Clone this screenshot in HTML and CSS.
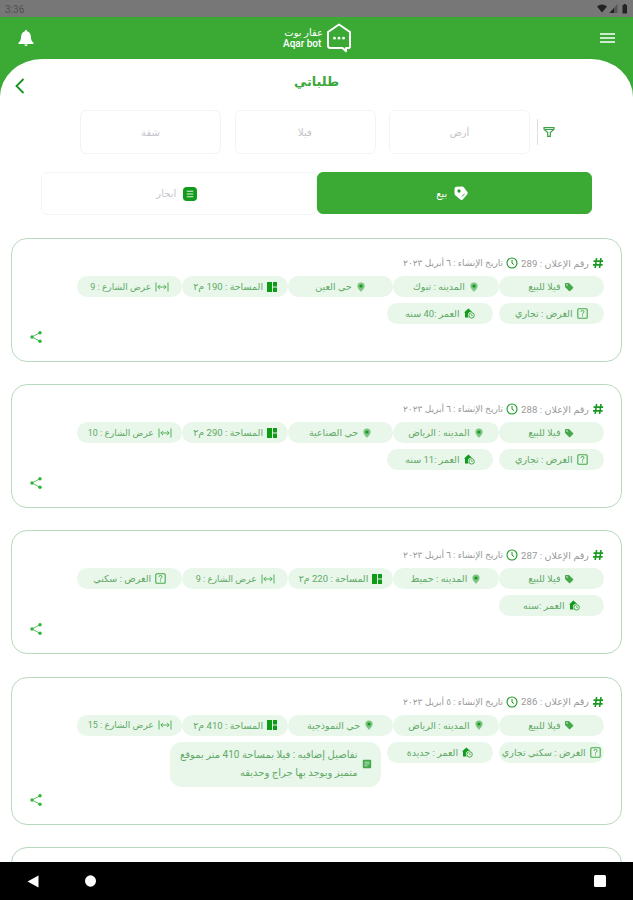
FILE: index.html
```
<!DOCTYPE html>
<html lang="ar" dir="rtl">
<head>
  <meta charset="UTF-8" />
  <meta name="viewport" content="width=device-width, initial-scale=1.0" />
  <title>طلباتي</title>
  <link rel="stylesheet" href="styles.css">
</head>
<body>
  <svg class="defs" width="0" height="0">
    <symbol id="hash" viewBox="0 0 12 12"><path d="M4.6 1 3.2 11M9 1 7.6 11M1.5 4.1h9.6M1 7.9h9.6" fill="none" stroke="currentColor" stroke-width="1.6"/></symbol>
    <symbol id="clock" viewBox="0 0 12 12"><circle cx="6" cy="6" r="5" fill="none" stroke="currentColor" stroke-width="1.1"/><path d="M6 3v3.2l2 1.4" fill="none" stroke="currentColor"/></symbol>
    <symbol id="tag" viewBox="0 0 10 10"><path d="M1 1.8Q1 1 1.8 1H5l4 4q.6.6 0 1.200L6.200 9Q5.600 9.600 5 9L1 5z" fill="currentColor"/><circle cx="3" cy="3" r=".8" fill="#e8f7ea"/></symbol>
    <symbol id="pin" viewBox="0 0 10 10"><path d="M5 .4a3.600 3.600 0 0 1 3.600 3.600C8.600 6.400 5 9.800 5 9.800S1.400 6.400 1.400 4A3.600 3.600 0 0 1 5 .4z" fill="currentColor" opacity=".65"/><circle cx="5" cy="4" r="1.600" fill="#119a1c"/></symbol>
    <symbol id="area" viewBox="0 0 10 10"><path d="M0 0h5v10H0zM6 0h4v4.400H6zM6 5.600h4V10H6z" fill="#0e9c16"/></symbol>
    <symbol id="width" viewBox="0 0 14 10"><path d="M1 .5v9M13 .5v9M3 5h8M5 2.800 2.800 5 5 7.200M9 2.800 11.200 5 9 7.200" fill="none" stroke="currentColor" stroke-width=".9"/></symbol>
    <symbol id="help" viewBox="0 0 11 11"><rect x=".8" y=".8" width="9.400" height="9.400" rx="1" fill="none" stroke="currentColor" stroke-width="1.100"/><path d="M4 3.800q0-1.300 1.500-1.300T7 3.800q0 .9-1.500 1.900v.8M5.500 7.500v1" fill="none" stroke="currentColor"/></symbol>
    <symbol id="age" viewBox="0 0 11 11"><path d="M0 4.600 4.400.5 8.500 4.300A3.300 3.300 0 0 0 4.600 9.500H1V4.600z" fill="#119a1c"/><circle cx="7.600" cy="7.400" r="2.700" fill="none" stroke="currentColor" stroke-width="1"/><path d="M7.600 6v1.500h1.200" fill="none" stroke="currentColor" stroke-width=".7"/></symbol>
    <symbol id="note" viewBox="0 0 10 10"><rect x=".8" y=".8" width="8.400" height="8.400" rx="1" fill="currentColor"/><path d="M2.500 3.200h5M2.500 5h5M2.500 6.800h3" stroke="#e8f7ea" stroke-width=".7"/></symbol>
    <symbol id="share" viewBox="0 0 12 12"><path d="M10 1.700 2 6l8 4.300" fill="none" stroke="currentColor" stroke-width=".8"/><circle cx="10" cy="1.800" r="1.700" fill="currentColor"/><circle cx="2" cy="6" r="1.700" fill="currentColor"/><circle cx="10" cy="10.200" r="1.700" fill="currentColor"/></symbol>
  </svg>

  <div class="status">
    <svg width="31" height="10" viewBox="0 0 31 10"><path d="M0 2.500Q5-1.500 10 2.500L5 8.500z" fill="#222"/><path d="M12.500 9 20.500 0v9z" fill="#555"/><path d="M12.500 9 17 4v5z" fill="#222"/><path d="M25.500 1h1.300V0h2v1H30v8.500h-4.500z" fill="#222"/></svg>
    <span class="time">3:36</span>
  </div>

  <header>
    <svg class="menu" width="15" height="10" viewBox="0 0 15 10"><path d="M0 1h15M0 5h15M0 9h15" stroke="#fff" stroke-width="1.300"/></svg>
    <div class="logo">
      <svg width="26" height="30" viewBox="0 0 26 30"><path d="M13 1.500 24 9v14.500q0 1.500-1.500 1.500H20v3.200L16.500 25h-12Q2 25 2 22.500V9z" fill="none" stroke="#fff" stroke-width="2" stroke-linejoin="round"/><g fill="#fff"><circle cx="8.500" cy="15.200" r="1.400"/><circle cx="13" cy="15.200" r="1.400"/><circle cx="17.500" cy="15.200" r="1.400"/></g></svg>
      <div class="logo-text">
        <span>عقار بوت</span>
        <span class="latin">Aqar bot</span>
      </div>
    </div>
    <svg class="bell" width="16" height="16" viewBox="0 0 16 16"><path d="M8 0q1 0 1.200 1.200C12 2 12.800 4.500 12.900 7c.1 3 1 4.300 2.600 5.700V14H.5v-1.300C2.100 11.300 3 10 3.100 7 3.200 4.500 4 2 6.800 1.200 7 0 8 0 8 0zM6.300 14.500h3.400Q9.400 16 8 16t-1.700-1.500z" fill="#fff"/></svg>
  </header>

  <main>
    <div class="title">
      <h1>طلباتي</h1>
      <svg class="back" width="10" height="16" viewBox="0 0 10 16"><path d="M8.500 1 1.500 8l7 7" fill="none" stroke="#18941c" stroke-width="1.800"/></svg>
    </div>

    <div class="filters">
      <svg width="12" height="12" viewBox="0 0 12 12"><path d="M1 1.500h10v1.800L7.300 6.500v3.800H4.700V6.500L1 3.300zM1.200 3.300h9.600" fill="none" stroke="#3aa044" stroke-width="1.200"/></svg>
      <i></i>
      <button>أرض</button>
      <button>فيلا</button>
      <button>شقة</button>
    </div>

    <div class="tabs">
      <button class="active">
        <svg width="14" height="15" viewBox="0 0 14 15"><path d="M.5 3Q.5.800 2.500.800L8 .5q1 0 2 1l3.300 4.500q.8 1.200-.2 2.400L8.800 13.400q-1.200 1.200-2.500.2L1.500 9.500Q.5 8.600.5 7.500z" fill="#fff"/><circle cx="5" cy="5" r="1.700" fill="#2f9d2e"/><path d="m8 10.500 2.500-2.700" stroke="#3aaa35"/></svg>
        <span>بيع</span>
      </button>
      <button>
        <svg width="14" height="14" viewBox="0 0 15 15"><rect width="15" height="15" rx="4" fill="#119a1c"/><path d="M4 4.500h7M4 7.500h7M4 10.500h7" stroke="#d9f2db" stroke-width="1.200"/></svg>
        <span>ايجار</span>
      </button>
    </div>

    <div class="card">
      <div class="meta"><svg><use href="#hash"/></svg><span class="num">رقم الإعلان : 289</span><svg><use href="#clock"/></svg><span class="date">تاريخ الإنشاء : ٦ أبريل ٢٠٢٣</span></div>
      <div class="chips">
        <div class="chip"><svg><use href="#tag"/></svg><span>فيلا للبيع</span></div>
        <div class="chip"><svg><use href="#pin"/></svg><span>المدينه : تبوك</span></div>
        <div class="chip"><svg><use href="#pin"/></svg><span>حي العين</span></div>
        <div class="chip"><svg><use href="#area"/></svg><span>المساحة : 190 م٢</span></div>
        <div class="chip street"><svg class="wide"><use href="#width"/></svg><span>عرض الشارع : 9</span></div>
      </div>
      <div class="chips second">
        <div class="chip"><svg class="big"><use href="#help"/></svg><span>الغرض : تجاري</span></div>
        <div class="chip"><svg class="big"><use href="#age"/></svg><span>العمر :40 سنه</span></div>
      </div>
      <svg class="share"><use href="#share"/></svg>
    </div>

    <div class="card">
      <div class="meta"><svg><use href="#hash"/></svg><span class="num">رقم الإعلان : 288</span><svg><use href="#clock"/></svg><span class="date">تاريخ الإنشاء : ٦ أبريل ٢٠٢٣</span></div>
      <div class="chips">
        <div class="chip"><svg><use href="#tag"/></svg><span>فيلا للبيع</span></div>
        <div class="chip"><svg><use href="#pin"/></svg><span>المدينه : الرياض</span></div>
        <div class="chip"><svg><use href="#pin"/></svg><span>حي الصناعية</span></div>
        <div class="chip"><svg><use href="#area"/></svg><span>المساحة : 290 م٢</span></div>
        <div class="chip street"><svg class="wide"><use href="#width"/></svg><span>عرض الشارع : 10</span></div>
      </div>
      <div class="chips second">
        <div class="chip"><svg class="big"><use href="#help"/></svg><span>الغرض : تجاري</span></div>
        <div class="chip"><svg class="big"><use href="#age"/></svg><span>العمر :11 سنه</span></div>
      </div>
      <svg class="share"><use href="#share"/></svg>
    </div>

    <div class="card">
      <div class="meta"><svg><use href="#hash"/></svg><span class="num">رقم الإعلان : 287</span><svg><use href="#clock"/></svg><span class="date">تاريخ الإنشاء : ٦ أبريل ٢٠٢٣</span></div>
      <div class="chips">
        <div class="chip"><svg><use href="#tag"/></svg><span>فيلا للبيع</span></div>
        <div class="chip"><svg><use href="#pin"/></svg><span>المدينه : حميط</span></div>
        <div class="chip"><svg><use href="#area"/></svg><span>المساحة : 220 م٢</span></div>
        <div class="chip street"><svg class="wide"><use href="#width"/></svg><span>عرض الشارع : 9</span></div>
        <div class="chip"><svg class="big"><use href="#help"/></svg><span>الغرض : سكني</span></div>
      </div>
      <div class="chips second">
        <div class="chip"><svg class="big"><use href="#age"/></svg><span>العمر :سنه</span></div>
      </div>
      <svg class="share"><use href="#share"/></svg>
    </div>

    <div class="card tall">
      <div class="meta"><svg><use href="#hash"/></svg><span class="num">رقم الإعلان : 286</span><svg><use href="#clock"/></svg><span class="date">تاريخ الإنشاء : ٥ أبريل ٢٠٢٣</span></div>
      <div class="chips">
        <div class="chip"><svg><use href="#tag"/></svg><span>فيلا للبيع</span></div>
        <div class="chip"><svg><use href="#pin"/></svg><span>المدينه : الرياض</span></div>
        <div class="chip"><svg><use href="#pin"/></svg><span>حي النموذجية</span></div>
        <div class="chip"><svg><use href="#area"/></svg><span>المساحة : 410 م٢</span></div>
        <div class="chip street"><svg class="wide"><use href="#width"/></svg><span>عرض الشارع : 15</span></div>
      </div>
      <div class="chips second">
        <div class="chip"><svg class="big"><use href="#help"/></svg><span>الغرض : سكني تجاري</span></div>
        <div class="chip"><svg class="big"><use href="#age"/></svg><span>العمر : جديدة</span></div>
        <div class="chip details"><svg><use href="#note"/></svg><p>تفاصيل إضافيه : فيلا بمساحة 410 متر بموقع<br>متميز ويوجد بها جراج وحديقه</p></div>
      </div>
      <svg class="share"><use href="#share"/></svg>
    </div>

    <div class="card"></div>
  </main>

  <nav>
    <svg width="12" height="12" viewBox="0 0 12 12"><rect width="12" height="12" rx="1.500" fill="#fff"/></svg>
    <svg class="home" width="11" height="12" viewBox="0 0 11 12"><ellipse cx="5.500" cy="6" rx="5.500" ry="5.800" fill="#fff"/></svg>
    <svg width="12" height="13" viewBox="0 0 12 13"><path d="M11.500.5v12L.5 6.500z" fill="#fff"/></svg>
  </nav>
</body>
</html>
```
FILE: styles.css
```
* {
  box-sizing: border-box;
}
body {
  margin: 0;
  height: 900px;
  overflow: hidden;
  display: flex;
  flex-direction: column;
  background: #3aaa35;
  font-family: Roboto, "DejaVu Sans", sans-serif;
  font-size: 9px;
}
svg {
  display: block;
  flex: none;
}
.defs {
  position: absolute;
}
.status {
  height: 17px;
  flex: none;
  background: #777;
  display: flex;
  align-items: center;
  justify-content: space-between;
  padding: 1px 5px 0;
}
.status svg {
  direction: ltr;
}
.time {
  color: #505050;
  font-size: 10px;
}
header {
  height: 42px;
  flex: none;
  display: flex;
  align-items: center;
  justify-content: space-between;
  padding: 0 18px;
}
.logo {
  display: flex;
  align-items: center;
  gap: 3px;
  color: #fff;
  margin-left: 1px;
}
.logo-text {
  width: 40px;
  text-align: right;
  font-size: 10px;
  line-height: 11px;
  display: flex;
  flex-direction: column;
  white-space: nowrap;
}
.latin {
  direction: ltr;
  text-align: left;
  font-weight: 500;
}
main {
  flex: 1;
  min-height: 0;
  overflow: hidden;
  background: #fff;
  border-radius: 42px 42px 0 0 / 38px 38px 0 0;
  padding: 0 11px;
}
.title {
  height: 51px;
  position: relative;
}
.title h1 {
  margin: 0;
  padding-top: 13px;
  text-align: center;
  color: #3aa83a;
  font-size: 12.800px;
  line-height: 20px;
}
.back {
  position: absolute;
  left: 4px;
  top: 19px;
}
.filters {
  display: flex;
  align-items: center;
  height: 44px;
  padding-right: 67px;
}
.filters i {
  width: 1px;
  height: 26px;
  background: #ddd;
  margin: 0 5px 0 7px;
}
button {
  font: inherit;
  background: #fff;
  border: 1px solid #f3f3f3;
  border-radius: 6px;
  color: #c4c4c8;
  padding: 0;
}
.filters button {
  width: 141px;
  height: 44px;
  margin-left: 13.500px;
  flex: none;
  font-size: 10px;
}
.tabs {
  display: flex;
  margin: 18px 30px 0 30px;
  height: 43px;
}
.tabs button {
  flex: 1;
  display: flex;
  align-items: center;
  justify-content: center;
  gap: 7px;
  font-size: 10px;
  padding-right: 4px;
}
.tabs .active {
  background: #3aaa35;
  border-color: #3aaa35;
  color: #fff;
  height: 42px;
}
.card {
  height: 124px;
  margin-bottom: 22.200px;
  border: 1px solid #b9d9bd;
  border-radius: 16px;
  padding: 17px 17px 0 0;
  position: relative;
}
.tabs + .card {
  margin-top: 23px;
}
.card.tall {
  height: 148px;
}
.meta {
  display: flex;
  align-items: center;
  height: 14px;
  color: #999;
  white-space: nowrap;
}
.meta svg {
  width: 12px;
  height: 12px;
  color: #18991f;
}
.num {
  width: 71px;
  margin-right: 3px;
  font-size: 9.600px;
}
.meta span + svg {
  margin-left: 3px;
}
.chips {
  display: flex;
  height: 21px;
  margin-top: 6px;
}
.chips.second {
  gap: 6px;
}
.chip {
  width: 105.400px;
  height: 21px;
  flex: none;
  border-radius: 11px;
  background: #e8f7ea;
  color: #62a867;
  display: flex;
  align-items: center;
  justify-content: center;
  gap: 4px;
  white-space: nowrap;
  font-size: 9.500px;
}
.chip.street {
  font-size: 9px;
}
.chip svg {
  width: 10px;
  height: 10px;
  color: #45a94c;
}
.chip .wide {
  width: 14px;
}
.chip .big {
  width: 11px;
  height: 11px;
}
.details {
  width: 211px;
  height: 45px;
  border-radius: 12px;
}
.details p {
  margin: 0;
  font-size: 10px;
  line-height: 18px;
}
.share {
  position: absolute;
  left: 18px;
  bottom: 18px;
  width: 12px;
  height: 12px;
  color: #2eb53a;
}
nav {
  height: 38px;
  flex: none;
  background: #000;
  display: flex;
  align-items: center;
  padding: 0 27px 0 27px;
}
nav .home {
  margin-right: auto;
  margin-left: 46px;
}
```
